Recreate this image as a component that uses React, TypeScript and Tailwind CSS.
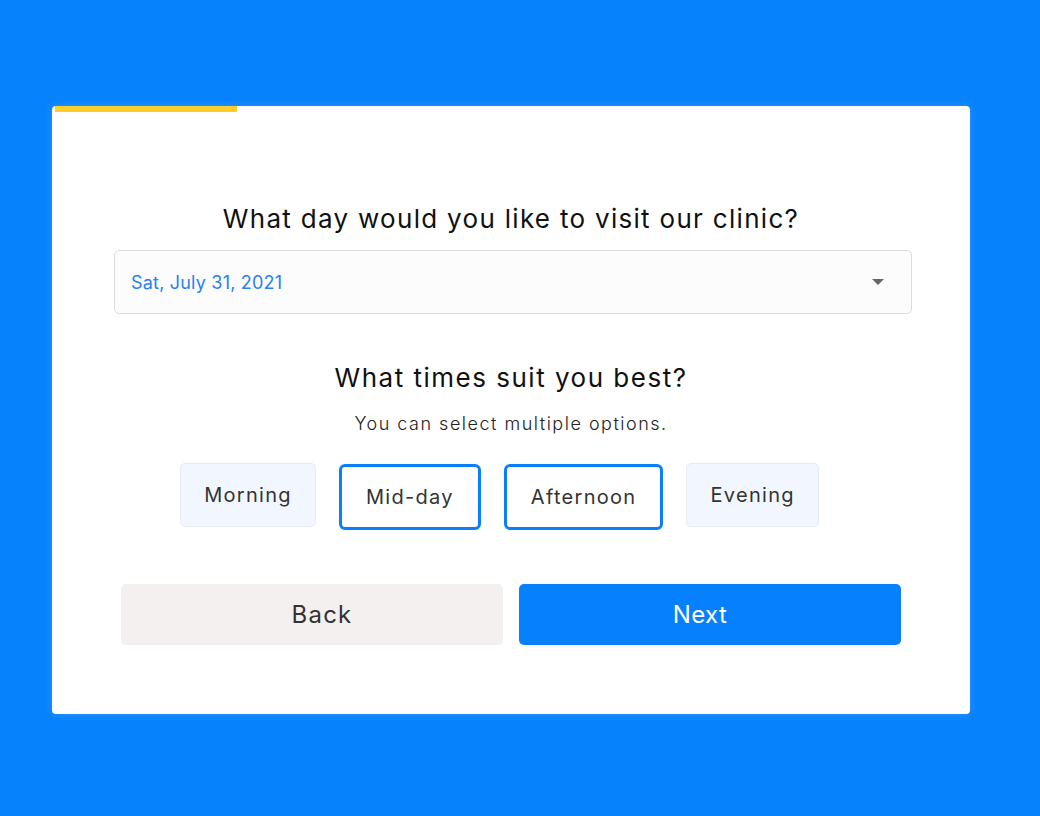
import { useState } from "react";

const FONT = { fontFamily: "Inter, 'Noto Sans', sans-serif" };

const SLOTS = ["Morning", "Mid-day", "Afternoon", "Evening"];

function TimeOption({
  label,
  selected,
  onClick,
}: {
  label: string;
  selected: boolean;
  onClick: () => void;
}) {
  return (
    <button
      type="button"
      onClick={onClick}
      className={
        selected
          ? "mr-[23px] mt-px flex h-[66px] items-center rounded-[6px] border-[3px] border-[#0a7ffb] bg-white px-[24px] text-[20px] tracking-[1.3px] text-[#333]"
          : "mr-[23px] flex h-[64px] items-center rounded-[5px] border border-[#e6ebf1] bg-[#f2f7ff] px-[23px] text-[20px] tracking-[1.3px] text-[#333]"
      }
    >
      {label}
    </button>
  );
}

export default function App() {
  const [picked, setPicked] = useState<string[]>(["Mid-day", "Afternoon"]);

  const toggle = (s: string) =>
    setPicked((p) => (p.includes(s) ? p.filter((x) => x !== s) : [...p, s]));

  return (
    <div className="min-h-[816px] w-full bg-[#0782fd] pl-[52px] pt-[106px]" style={FONT}>
      <div className="flex h-[608px] w-[918px] flex-col overflow-hidden rounded-[4px] bg-white shadow-[0_0_10px_rgba(255,255,255,0.15)]">
        {/* progress */}
        <div className="ml-[3px] h-[6px] w-[182px] bg-[#ffcd29]" />

        <h1 className="mt-[86px] flex h-[40px] items-center justify-center text-[26px] tracking-[1.3px] text-[#111]">
          What day would you like to visit our clinic?
        </h1>

        <div className="ml-[62px] mr-[58px] mt-[12px] flex h-[64px] items-center justify-between rounded-[5px] border border-[#dcdcdc] bg-[#fcfcfc] pl-[16px] pr-[27px]">
          <span className="text-[18px] tracking-[0.2px] text-[#2b7ff6]">Sat, July 31, 2021</span>
          <svg width="12" height="6" viewBox="0 0 12 6">
            <path d="M0 0h12L6 6z" fill="#666" />
          </svg>
        </div>

        <h2 className="mt-[43px] flex h-[40px] items-center justify-center text-[26px] tracking-[1.5px] text-[#111]">
          What times suit you best?
        </h2>
        <p className="mt-[12px] flex h-[28px] items-center justify-center text-[18px] font-light tracking-[1.5px] text-[#222]">
          You can select multiple options.
        </p>

        <div className="mt-[26px] flex items-start justify-center">
          {SLOTS.map((s) => (
            <TimeOption key={s} label={s} selected={picked.includes(s)} onClick={() => toggle(s)} />
          ))}
        </div>

        <div className="mx-[69px] mt-[54px] grid grid-cols-2 gap-4">
          <button type="button" className="h-[61px] rounded-[5px] bg-[#f3f0ef] pl-[20px] text-[24px] tracking-[1.2px] text-[#333]">
            Back
          </button>
          <button type="button" className="h-[61px] rounded-[5px] bg-[#0780fd] pr-[20px] text-[24px] tracking-[0.4px] text-white">
            Next
          </button>
        </div>
      </div>
    </div>
  );
}
